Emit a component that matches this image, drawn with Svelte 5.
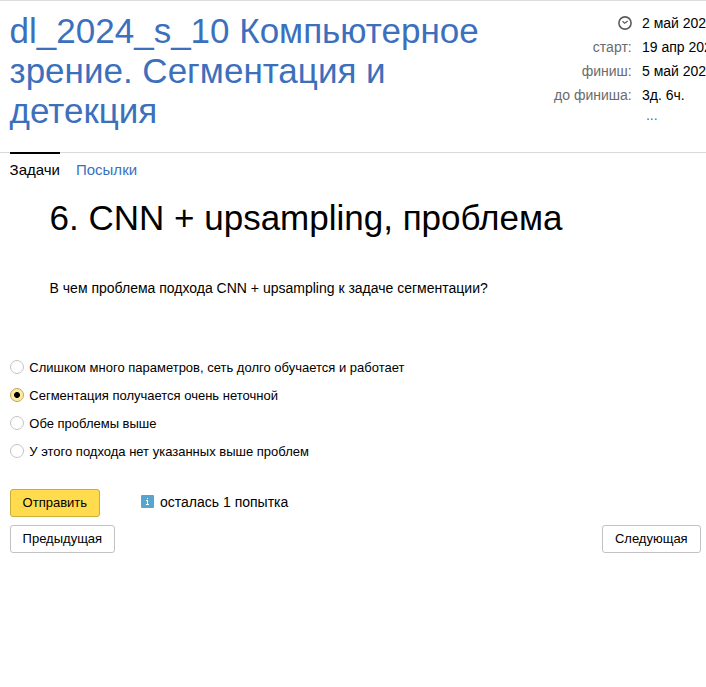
<script>
  const times = [
    ['старт:', '19 апр 2024, 19:00:00'],
    ['финиш:', '5 май 2024, 23:59:59'],
    ['до финиша:', '3д. 6ч.']
  ];
  const options = [
    'Слишком много параметров, сеть долго обучается и работает',
    'Сегментация получается очень неточной',
    'Обе проблемы выше',
    'У этого подхода нет указанных выше проблем'
  ];
  let selected = $state(1);
</script>

<div class="page">
  <header>
    <h1>dl_2024_s_10 Компьютерное зрение. Сегментация и детекция</h1>
    <div class="times">
      <div class="row">
        <span class="label"><svg width="14" height="14" viewBox="0 0 14 14"><circle cx="7" cy="7" r="6.1" fill="none" stroke="#5c5c60" stroke-width="1.6" /><path d="M4.5 5.3 6.7 7.3 9.7 5" fill="none" stroke="#5c5c60" stroke-width="1.2" /></svg></span>
        <span>2 май 2024, 17:40:22</span>
      </div>
      {#each times as [label, value]}
        <div class="row"><span class="label">{label}</span><span>{value}</span></div>
      {/each}
      <div class="more">...</div>
    </div>
  </header>
  <nav><a class="active">Задачи</a><a>Посылки</a></nav>
  <h2>6. CNN + upsampling, проблема</h2>
  <p>В чем проблема подхода CNN + upsampling к задаче сегментации?</p>
  <div class="options">
    {#each options as option, i}
      <label><input type="radio" name="answer" value={i} bind:group={selected} /><span>{option}</span></label>
    {/each}
  </div>
  <div class="submit">
    <button class="primary">Отправить</button>
    <svg width="13" height="13" viewBox="0 0 13 13"><rect width="13" height="13" rx="1" fill="#56a5cf" /><path d="M6 3h1v1H6zM5 5h2v4h1v1H5V9h1V6H5z" fill="#fff" /></svg>
    <span>осталась 1 попытка</span>
  </div>
  <div class="pager"><button>Предыдущая</button><button>Следующая</button></div>
</div>

<style>
  :global(body) { background: #fff; overflow: hidden; }
  .page { box-sizing: border-box; width: 706px; height: 687px; overflow: hidden; border-top: 1px solid #ddd; font: 14px/24px "Liberation Sans", Arial, sans-serif; color: #000; }
  header { display: flex; height: 151px; border-bottom: 1px solid #d9d9d9; overflow: hidden; }
  h1 { flex: none; width: 490px; margin: 10px 0 0 9.6px; font-size: 35px; line-height: 40px; font-weight: 400; color: #3c70bd; }
  .times { flex: none; margin: 10px 0 0 44.4px; white-space: nowrap; }
  .row { display: flex; gap: 10px; height: 24px; }
  .label { width: 88px; margin-left: -0.3px; margin-right: 0.3px; text-align: right; color: #6b6b6b; }
  .label svg { vertical-align: -2px; }
  .more { margin-left: 102px; line-height: 16px; color: #2f78c0; }
  nav { display: flex; gap: 16px; margin: -1px 0 0 9.6px; font-size: 15px; line-height: 32px; color: #3c70bd; }
  nav a { height: 32px; border-top: 2px solid transparent; }
  nav .active { border-color: #000; color: #000; }
  h2 { margin: 10px 0 0 49.6px; font-size: 35px; line-height: 44px; font-weight: 400; }
  p { margin: 36px 0 0 49.6px; }
  .options { margin: 53px 0 0 10px; font-size: 13px; }
  label { display: flex; align-items: center; height: 28px; gap: 5.3px; }
  label span { padding-top: 2px; }
  input { appearance: none; box-sizing: border-box; width: 14px; height: 14px; margin: 0; border: 1px solid #c4c4c4; border-radius: 50%; background: #fff; }
  input:checked { border-color: #c0a750; background: radial-gradient(circle, #000 2.6px, #ffeba0 3.3px); }
  .submit { display: flex; align-items: center; margin: 24px 0 0 10px; height: 28px; }
  button { box-sizing: border-box; height: 28px; padding: 0 12px 1px 11.6px; border: 1px solid #c3c3c3; border-radius: 3px; background: #fff; color: #000; font: 13px "Liberation Sans", Arial, sans-serif; }
  .primary { width: 90px; background: #ffdb4d; border-color: #c9ad3d; margin-right: 41px; }
  .submit svg { margin-bottom: 3px; }
  .submit span { margin: 0 0 2px 6px; }
  .pager { display: flex; justify-content: space-between; margin: 8px 5px 0 10px; }
  .pager button:first-child { width: 105px; }
  .pager button:last-child { width: 99px; }
</style>
